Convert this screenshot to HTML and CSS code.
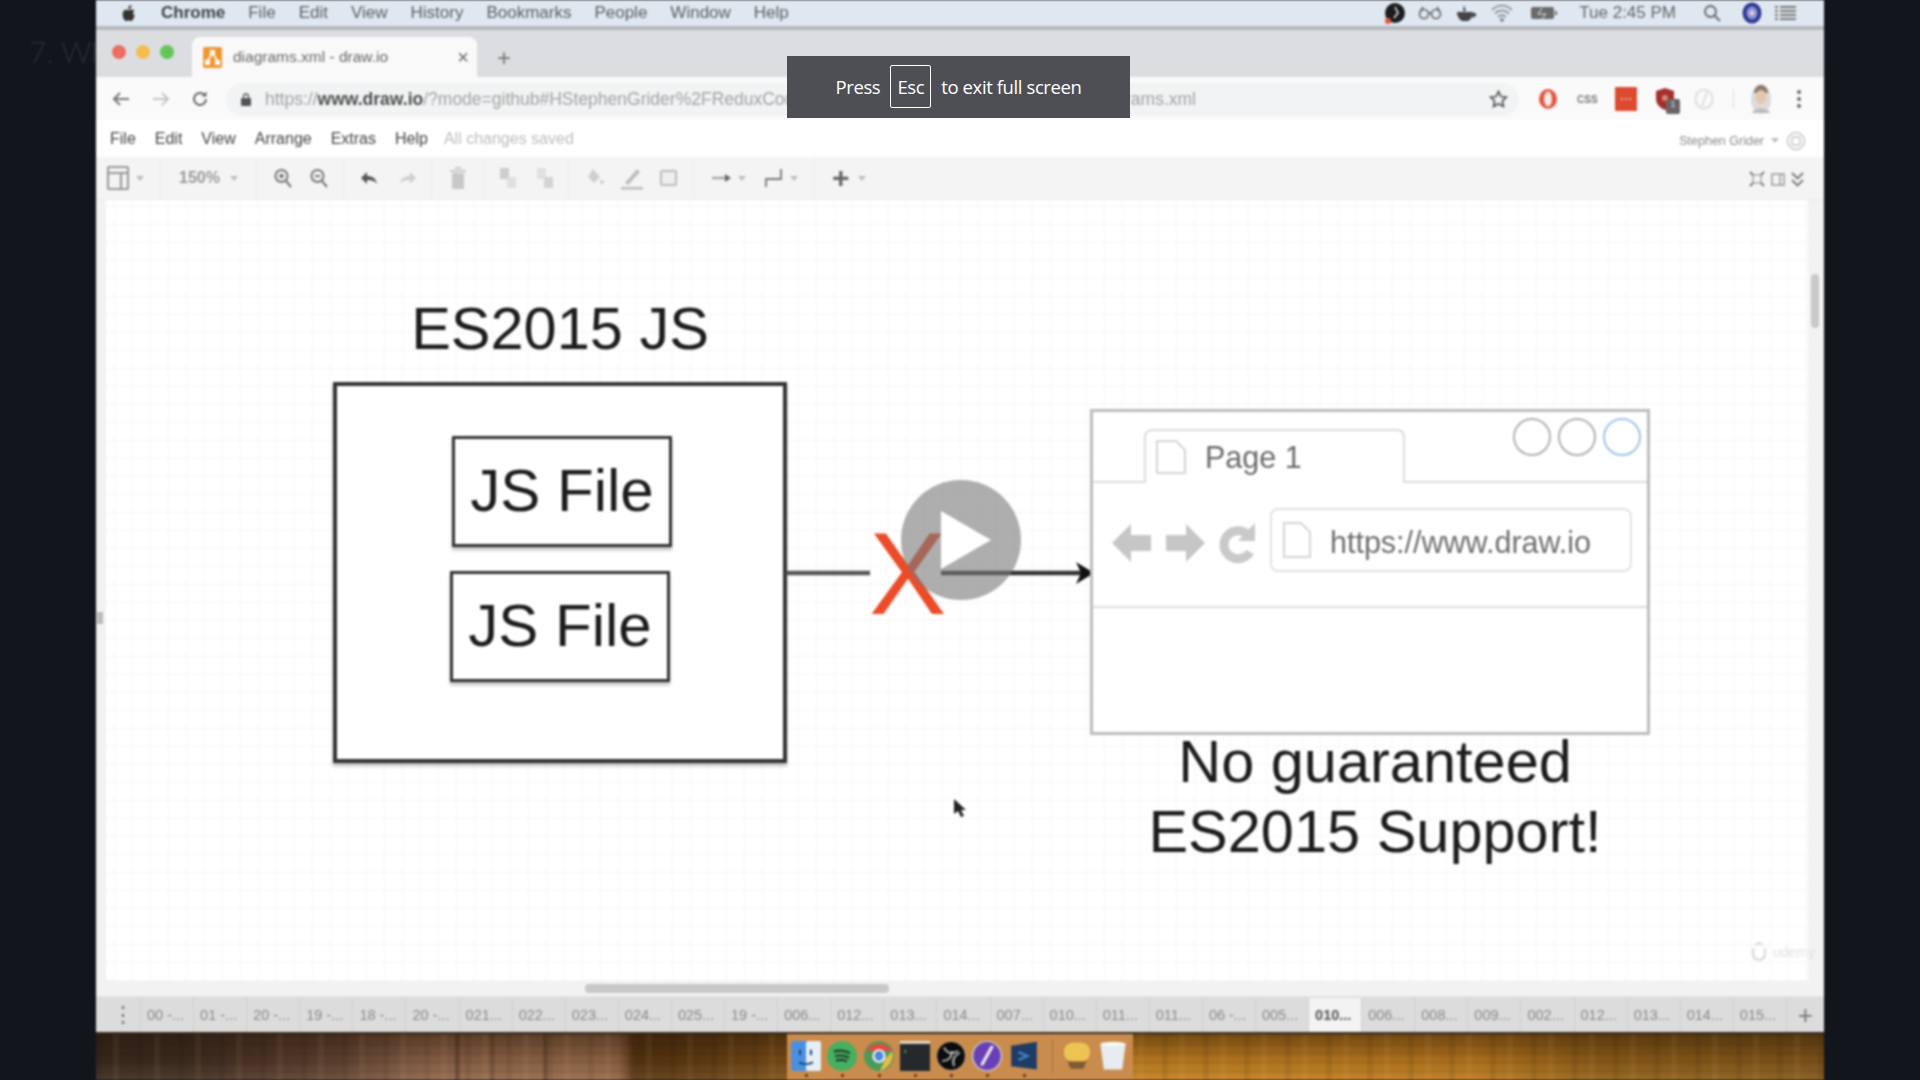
FILE: index.html
```html
<!DOCTYPE html>
<html lang="en">
<head>
<meta charset="utf-8">
<title>diagrams.xml - draw.io</title>
<link rel="stylesheet" href="styles.css">
</head>
<body>
<div class="stage">
  <main class="video">
    <header class="menubar">
      <svg class="apple" viewBox="0 0 16 18" width="15" height="17"><path d="M11.2 0c.1 1.300-.4 2.300-1 3-.7.800-1.700 1.300-2.600 1.200C7.400 3 8 1.900 8.600 1.300 9.300.6 10.400.1 11.200 0zM14.300 6c-1.700 1-1.900 3.600.3 5.500-.5 1.600-1.200 3-2.200 4.300-.9 1.200-1.800 1.400-2.900 1-1.100-.5-1.900-.5-3 0-1.200.5-2 .2-2.900-1C1.700 12.900 1 9 2.600 6.600c1.200-1.800 3.200-2 4.500-1.300.6.300 1.100.3 1.700 0 1.900-.9 4-.6 5.500.7z"/></svg>
      <span class="mb-item mb-strong">Chrome</span>
      <span class="mb-item">File</span><span class="mb-item">Edit</span><span class="mb-item">View</span><span class="mb-item">History</span><span class="mb-item">Bookmarks</span><span class="mb-item">People</span><span class="mb-item">Window</span><span class="mb-item">Help</span>
      <div class="mb-status">
        <svg width="22" height="24" viewBox="0 0 22 24"><circle cx="11" cy="12" r="10" fill="#1c1c1e"/><circle cx="4" cy="20" r="3" fill="#e8543a"/><path d="M11 6l3 6-4 5" stroke="#eee" stroke-width="1.500" fill="none"/></svg>
        <svg width="24" height="16" viewBox="0 0 24 16" fill="none" stroke="#666" stroke-width="1.600"><circle cx="6" cy="9" r="4.500"/><circle cx="18" cy="9" r="4.500"/><path d="M10 8h4M2 7l3-5M22 7l-3-5"/></svg>
        <svg width="24" height="20" viewBox="0 0 24 20" fill="#444"><path d="M3 9h16c0 5-3 8-5 9H8c-2-1-5-4-5-9z"/><path d="M19 10h3v3l-4 2z"/><path d="M10 2l2 6h-3z"/></svg>
        <svg width="24" height="20" viewBox="0 0 24 20" fill="none" stroke="#888" stroke-width="1.700"><path d="M2 7c6-6 14-6 20 0M5 10.500c4-4 10-4 14 0M8 14c2.500-2.400 5.500-2.400 8 0"/><circle cx="12" cy="17" r="1.200" fill="#888"/></svg>
        <svg class="mb-battery" width="28" height="16" viewBox="0 0 28 16"><rect x="1" y="2" width="23" height="12" rx="2" fill="#6a6a6a"/><rect x="25" y="6" width="2" height="4" fill="#6a6a6a"/><path d="M12 3l-4 6h8l-4 5" stroke="#dfe8f1" fill="none"/></svg>
        <span class="mb-clock">Tue 2:45 PM</span>
        <svg width="18" height="18" viewBox="0 0 18 18" fill="none" stroke="#666" stroke-width="1.800"><circle cx="7.500" cy="7.500" r="5.500"/><path d="M11.500 11.500L17 17"/></svg>
        <svg class="siri" width="20" height="22" viewBox="0 0 20 22"><ellipse cx="10" cy="11" rx="9.500" ry="10.500" fill="#2e3a90"/><ellipse cx="10" cy="11" rx="5.500" ry="6.500" fill="#8b93d8"/><circle cx="10" cy="11" r="2.500" fill="#e9c6d8"/></svg>
        <svg width="22" height="18" viewBox="0 0 22 18" fill="#777"><path d="M6 2h16v2H6zM6 6h16v2H6zM6 10h16v2H6zM6 14h16v2H6zM1 2h3v2H1zM1 6h3v2H1zM1 10h3v2H1zM1 14h3v2H1z"/></svg>
      </div>
    </header>

    <section class="tabstrip">
      <div class="lights"><i class="light red"></i><i class="light yellow"></i><i class="light green"></i></div>
      <div class="tab">
        <svg width="19" height="21" viewBox="0 0 19 21"><rect width="19" height="21" rx="2" fill="#f0962e"/><path d="M9.500 6L4.500 14M9.500 6L14.500 14" stroke="#fff" stroke-width="1.500"/><rect x="7" y="3" width="5" height="5" fill="#fff"/><rect x="2" y="13" width="5" height="5" fill="#fff"/><rect x="12" y="13" width="5" height="5" fill="#fff"/></svg>
        <span class="tab-title">diagrams.xml - draw.io</span>
        <span class="tab-close">×</span>
      </div>
      <span class="tab-new">+</span>
    </section>

    <section class="addressbar">
      <svg width="20" height="18" viewBox="0 0 20 18" fill="none" stroke="#777" stroke-width="2"><path d="M18 9H3M9 3L3 9l6 6"/></svg>
      <svg width="20" height="18" viewBox="0 0 20 18" fill="none" stroke="#c4c4c4" stroke-width="2"><path d="M2 9h15M11 3l6 6-6 6"/></svg>
      <svg width="18" height="18" viewBox="0 0 18 18" fill="none" stroke="#666" stroke-width="2"><path d="M15 9a6 6 0 1 1-2-4.500"/><path d="M15.500 1.500v5h-5z" fill="#666" stroke="none"/></svg>
      <div class="omnibox">
        <svg width="10" height="13" viewBox="0 0 10 13" fill="#555"><rect y="5" width="10" height="8" rx="1"/><path d="M2.500 5V3.500a2.500 2.500 0 0 1 5 0V5" fill="none" stroke="#555" stroke-width="1.300"/></svg>
        <span class="url"><span class="url-dim">https://</span><b class="url-host">www.draw.io</b><span class="url-dim">/?mode=github#HStephenGrider%2FReduxCode%2Fmaster%2Fdiagrams%2Fv1%2Fdiagrams.xml</span></span>
        <svg class="star" width="19" height="18" viewBox="0 0 19 18" fill="none" stroke="#555" stroke-width="1.700"><path d="M9.500 1.500l2.400 5 5.500.7-4 3.800 1 5.500-4.900-2.700-4.900 2.700 1-5.500-4-3.800 5.500-.7z"/></svg>
      </div>
      <div class="extensions">
        <svg width="22" height="24" viewBox="0 0 22 24"><ellipse cx="11" cy="12" rx="9" ry="10" fill="#e2563f"/><ellipse cx="11" cy="12" rx="4" ry="7.500" fill="#f6e9e6"/></svg>
        <span class="ext-css">CSS</span>
        <svg width="22" height="24" viewBox="0 0 22 24"><rect width="22" height="24" rx="1" fill="#dc4b2f"/><path d="M6 12h2M10 12h2M14 12h2" stroke="#f7c6ba" stroke-width="1.500"/></svg>
        <div class="ext-shield">
          <svg width="20" height="22" viewBox="0 0 20 22"><path d="M10 0l9 3v8c0 5-4 9-9 11-5-2-9-6-9-11V3z" fill="#a4302c"/><circle cx="10" cy="10" r="3" fill="#d58a83"/></svg>
          <span class="ext-badge">1</span>
        </div>
        <svg width="22" height="24" viewBox="0 0 22 24" fill="none" stroke="#dedede" stroke-width="2"><ellipse cx="11" cy="12" rx="8.500" ry="9.500"/><path d="M14 5l-5 14"/></svg>
        <i class="ext-divider"></i>
        <svg class="avatar" width="22" height="32" viewBox="0 0 22 32"><ellipse cx="11" cy="16" rx="10" ry="15" fill="#dcdcdc"/><path d="M4 10c0-5 4-8 7-8s7 3 7 8z" fill="#8a7b6e"/><ellipse cx="11" cy="14" rx="5.500" ry="7" fill="#e5c6b1"/><path d="M2 30c2-6 16-6 18 0z" fill="#bbb"/></svg>
        <svg class="ext-more" width="6" height="20" viewBox="0 0 6 20" fill="#666"><circle cx="3" cy="3" r="2"/><circle cx="3" cy="10" r="2"/><circle cx="3" cy="17" r="2"/></svg>
      </div>
    </section>

    <nav class="appmenu">
      <span class="am-item">File</span><span class="am-item">Edit</span><span class="am-item">View</span><span class="am-item">Arrange</span><span class="am-item">Extras</span><span class="am-item">Help</span>
      <span class="am-saved">All changes saved</span>
      <div class="am-user">
        <span class="am-name">Stephen Grider</span>
        <i class="caret"></i>
        <svg width="20" height="20" viewBox="0 0 20 20" fill="none" stroke="#c4c4c4" stroke-width="1.500"><circle cx="10" cy="10" r="8.500"/><rect x="6" y="6" width="8" height="8" rx="1"/></svg>
      </div>
    </nav>

    <section class="toolbar">
      <div class="tb-group tb-first">
        <svg width="22" height="26" viewBox="0 0 22 26" fill="none" stroke="#999" stroke-width="2.200"><rect x="1" y="2" width="20" height="22" rx="1"/><path d="M1 8h20M14 8v16"/></svg><i class="caret"></i>
      </div>
      <div class="tb-group tb-zoomlevel"><span class="tb-text">150%</span><i class="caret"></i></div>
      <div class="tb-group tb-zoom">
        <svg width="18" height="20" viewBox="0 0 18 20" fill="none" stroke="#777" stroke-width="2"><circle cx="7.500" cy="8" r="6"/><path d="M12 13l5 6M5 8h5M7.500 5.500v5"/></svg>
        <svg width="18" height="20" viewBox="0 0 18 20" fill="none" stroke="#777" stroke-width="2"><circle cx="7.500" cy="8" r="6"/><path d="M12 13l5 6M5 8h5"/></svg>
      </div>
      <div class="tb-group tb-undo">
        <svg width="18" height="14" viewBox="0 0 18 14"><path d="M1 7l6-6v4c5 0 9 2 10 8-2-3-5-4-10-4v4z" fill="#555"/></svg>
        <svg width="18" height="14" viewBox="0 0 18 14"><path d="M17 7l-6-6v4c-5 0-9 2-10 8 2-3 5-4 10-4v4z" fill="#cfcfcf"/></svg>
      </div>
      <div class="tb-group tb-delete">
        <svg width="16" height="22" viewBox="0 0 16 22" fill="#c8c8c8"><path d="M0 3h16v2H0zM5 0h6v2H5zM2 6h12v16H2z"/></svg>
      </div>
      <div class="tb-group tb-order">
        <svg width="20" height="22" viewBox="0 0 20 22" fill="#cdcdcd"><rect x="2" y="1" width="9" height="11"/><rect x="9" y="10" width="9" height="11" fill="#e0e0e0"/></svg>
        <svg width="20" height="22" viewBox="0 0 20 22" fill="#d4d4d4"><rect x="2" y="1" width="9" height="11" fill="#e0e0e0"/><rect x="9" y="10" width="9" height="11"/></svg>
      </div>
      <div class="tb-group tb-style">
        <svg width="20" height="20" viewBox="0 0 20 20" fill="#cfcfcf"><path d="M8 1l7 8-6 6-6-6z"/><circle cx="17" cy="14" r="2"/></svg>
        <svg width="24" height="24" viewBox="0 0 24 24"><path d="M5 17L17 3l3 3L8 19z" fill="#bdbdbd"/><rect x="1" y="21" width="22" height="2.500" fill="#bdbdbd"/></svg>
        <svg width="20" height="18" viewBox="0 0 20 18" fill="#eee" stroke="#bdbdbd" stroke-width="2"><rect x="2" y="2" width="15" height="14" rx="1"/></svg>
      </div>
      <div class="tb-group tb-conn">
        <svg width="20" height="10" viewBox="0 0 20 10"><path d="M0 5h14" stroke="#aaa" stroke-width="2.500"/><path d="M13 1l6 4-6 4z" fill="#666"/></svg><i class="caret"></i>
        <svg class="tb-elbow" width="20" height="22" viewBox="0 0 20 22" fill="none" stroke="#777" stroke-width="1.800"><path d="M2 20v-8h15V2"/></svg><i class="caret"></i>
      </div>
      <div class="tb-group tb-plus">
        <span class="tb-plus-sign">+</span><i class="caret"></i>
      </div>
      <div class="tb-right">
        <svg width="16" height="16" viewBox="0 0 16 16" fill="none" stroke="#777" stroke-width="1.800"><path d="M1 1l14 14M15 1L1 15"/><rect x="4" y="4" width="8" height="8" fill="#f4f4f4" stroke="#999" stroke-width="1.200"/></svg>
        <svg width="14" height="13" viewBox="0 0 14 13" fill="none" stroke="#999" stroke-width="1.500"><rect x="1" y="1" width="12" height="11"/><path d="M9 1v11"/></svg>
        <svg width="13" height="15" viewBox="0 0 13 15" fill="none" stroke="#777" stroke-width="1.800"><path d="M1 1l5.500 5.500L12 1M1 8l5.500 5.500L12 8"/></svg>
      </div>
    </section>

    <section class="workspace">
      <div class="canvas">
        <div class="node heading">ES2015 JS</div>
        <div class="node outer"></div>
        <div class="node file file-a">JS File</div>
        <div class="node file file-b">JS File</div>

        <svg class="node connector" width="310" height="100" viewBox="0 0 310 100">
          <path class="conn-line" d="M0 50H84"/>
          <path class="conn-line conn-dark" d="M155 50H296"/>
          <path class="conn-head" d="M290 39l18 11-18 11 5-11z"/>
        </svg>
        <div class="node red-x">X</div>

        <div class="node browser">
          <div class="br-top">
            <div class="br-tab">
              <svg width="32" height="36" viewBox="0 0 32 36" fill="#fff" stroke="#d5d5d5" stroke-width="2"><path d="M2 2h19l9 9v23H2z"/></svg>
              <span class="br-tab-text">Page 1</span>
            </div>
            <div class="br-circles"><i class="br-c"></i><i class="br-c"></i><i class="br-c br-c-blue"></i></div>
          </div>
          <div class="br-nav">
            <div class="br-arrows">
              <svg width="40" height="50" viewBox="0 0 40 50" fill="#c6c6c6"><path d="M0 25L19 6v11h20v16H19v11z"/></svg>
              <svg width="40" height="50" viewBox="0 0 40 50" fill="#c6c6c6"><path d="M40 25L21 6v11H1v16h20v11z"/></svg>
              <svg width="38" height="44" viewBox="0 0 38 44" fill="none" stroke="#c9c9c9" stroke-width="9"><path d="M32 31a14 14 0 1 1-1-16"/><path d="M37 2v18H20z" fill="#c9c9c9" stroke="none"/></svg>
            </div>
            <div class="br-url">
              <svg width="30" height="38" viewBox="0 0 30 38" fill="#fff" stroke="#d5d5d5" stroke-width="2"><path d="M2 2h17l9 9v25H2z"/></svg>
              <span class="br-url-text">https://www.draw.io</span>
            </div>
          </div>
        </div>

        <div class="node caption">No guaranteed<br>ES2015 Support!</div>

        <div class="node play"><i class="play-tri"></i></div>
        <svg class="node cursor" width="14" height="20" viewBox="0 0 14 20"><path d="M1 1v15l4-3 3 6 3-1-3-6h5z" fill="#222"/></svg>
        <div class="node watermark">
          <svg width="18" height="20" viewBox="0 0 18 20" fill="none" stroke="#dcdcdc" stroke-width="2.500"><path d="M3 6v6a6 6 0 0 0 12 0V6M5 3l4-2 4 2"/></svg>
          <span>udemy</span>
        </div>
        <i class="node v-thumb"></i>
        <i class="node left-grip"></i>
      </div>
      <div class="hscroll"><i class="hscroll-thumb"></i></div>
    </section>

    <footer class="pagebar">
      <span class="pb-menu">⋮</span>
      <span class="pb-tab">00 -...</span><span class="pb-tab">01 -...</span><span class="pb-tab">20 -...</span><span class="pb-tab">19 -...</span><span class="pb-tab">18 -...</span><span class="pb-tab">20 -...</span><span class="pb-tab">021...</span><span class="pb-tab">022...</span><span class="pb-tab">023...</span><span class="pb-tab">024...</span><span class="pb-tab">025...</span><span class="pb-tab">19 -...</span><span class="pb-tab">006...</span><span class="pb-tab">012...</span><span class="pb-tab">013...</span><span class="pb-tab">014...</span><span class="pb-tab">007...</span><span class="pb-tab">010...</span><span class="pb-tab">011...</span><span class="pb-tab">011...</span><span class="pb-tab">06 -...</span><span class="pb-tab">005...</span><span class="pb-tab pb-active">010...</span><span class="pb-tab">006...</span><span class="pb-tab">008...</span><span class="pb-tab">009...</span><span class="pb-tab">002...</span><span class="pb-tab">012...</span><span class="pb-tab">013...</span><span class="pb-tab">014...</span><span class="pb-tab">015...</span>
      <span class="pb-add">+</span>
    </footer>

    <section class="desktop">
      <div class="dock">
        <span class="dock-app"><svg viewBox="0 0 30 34" preserveAspectRatio="none"><rect width="30" height="34" rx="3" fill="#4a90e2"/><rect x="15" width="15" height="34" rx="2" fill="#e6eef8"/><path d="M9 10v6M20 10v6M8 24c4 3 10 3 14 0" stroke="#1c3f6e" stroke-width="2" fill="none"/></svg></span>
        <span class="dock-app"><svg viewBox="0 0 30 34" preserveAspectRatio="none"><ellipse cx="15" cy="17" rx="15" ry="17" fill="#46b060"/><path d="M7 12c6-2 11-1 16 2M8 17c5-1 10-1 14 2M9 22c4-1 8-1 11 1" stroke="#1d3a27" stroke-width="2.500" fill="none"/></svg></span>
        <span class="dock-app"><svg viewBox="0 0 30 36" preserveAspectRatio="none"><ellipse cx="15" cy="18" rx="15" ry="18" fill="#4c9a5a"/><path d="M2 12C6 0 24 0 28 12H15z" fill="#d9503f"/><path d="M28 12c3 10-3 20-12 24l5-14z" fill="#e6bb45"/><ellipse cx="15" cy="18" rx="6.500" ry="8" fill="#fff"/><ellipse cx="15" cy="18" rx="4.500" ry="6" fill="#4e86dc"/></svg></span>
        <span class="dock-app"><svg viewBox="0 0 32 32" preserveAspectRatio="none"><rect width="32" height="32" fill="#23292c"/><rect width="32" height="3" fill="#e8dfd2"/><path d="M4 9l3 2-3 2" stroke="#5fae6b" fill="none"/></svg></span>
        <span class="dock-app"><svg viewBox="0 0 30 36" preserveAspectRatio="none"><ellipse cx="15" cy="18" rx="14.500" ry="17.500" fill="#0c0c0c" stroke="#c8a88a" stroke-width="1"/><path d="M8 8c4 8 8 8 14 4M24 14c-6 4-8 8-6 16M6 24c6 0 10-4 10-12" stroke="#bbb" stroke-width="2" fill="none"/></svg></span>
        <span class="dock-app"><svg viewBox="0 0 28 36" preserveAspectRatio="none"><ellipse cx="14" cy="18" rx="13.500" ry="17.500" fill="#6a3fb5" stroke="#ccc" stroke-width="1.500"/><path d="M19 6L9 29" stroke="#eee" stroke-width="3"/></svg></span>
        <span class="dock-app"><svg viewBox="0 0 28 38" preserveAspectRatio="none"><path d="M2 6l24-5v35L2 32z" fill="#1f3c66"/><path d="M9 14l8 5-8 5" stroke="#4a8ad4" stroke-width="2.500" fill="none"/></svg></span>
        <i class="dock-divider"></i>
        <span class="dock-stack"><svg viewBox="0 0 28 38" preserveAspectRatio="none"><rect x="2" y="2" width="24" height="24" rx="9" fill="#edc454"/><path d="M5 26h18l-3 9H8z" fill="#7f5a33"/></svg></span>
        <span class="dock-trash"><svg viewBox="0 0 26 40" preserveAspectRatio="none"><path d="M2 4h22l-3 34H5z" fill="#e8ecf0"/><ellipse cx="13" cy="4" rx="11" ry="3" fill="#f7f8fa"/></svg></span>
      </div>
    </section>
  </main>

  <div class="course-title">7. Why Create React App?</div>

  <div class="fs-notice">
    <span class="fs-text">Press</span>
    <kbd class="fs-key">Esc</kbd>
    <span class="fs-text">to exit full screen</span>
  </div>
</div>
</body>
</html>
```

FILE: styles.css
```css
* { box-sizing: border-box; }
html, body { margin: 0; height: 100%; }
body { background: #12161c; overflow: hidden; font-family: "Liberation Sans", Arial, sans-serif; }
i { display: block; font-style: normal; }

.stage { position: relative; width: 1920px; height: 1080px; display: flex; justify-content: center; overflow: hidden; }

.course-title { position: absolute; left: 29px; top: 33px; font: 300 30px "Lato", sans-serif; color: rgba(255,255,255,.1); white-space: nowrap; z-index: 2; filter: blur(.8px); }

.video { position: relative; z-index: 1; width: 1728px; height: 1080px; display: flex; flex-direction: column; filter: blur(1px); color: #555; background: #fff; }

.menubar { height: 30px; flex: none; background: #dfe8f1; border-bottom: 4px solid #b4b9be; display: flex; align-items: center; padding-left: 25px; padding-right: 28px; font-size: 17px; color: #555; }
.apple { fill: #333; margin-right: 25px; }
.mb-item { margin-right: 23px; color: #5a5e62; }
.mb-strong { font-weight: bold; color: #3c4145; }
.mb-status { margin-left: auto; display: flex; align-items: center; gap: 12px; }
.mb-battery { margin-left: 4px; }
.mb-clock { margin: 0 15px 0 9px; color: #666; }
.siri { margin-left: 9px; }

.tabstrip { height: 47px; flex: none; background: #dcdde0; display: flex; align-items: flex-end; padding-left: 16px; }
.lights { display: flex; gap: 10px; align-self: center; margin-right: 18px; margin-top: -4px; }
.light { width: 14px; height: 14px; border-radius: 50%; }
.red { background: #ee6a5f; } .yellow { background: #f4bd4f; } .green { background: #60c453; }
.tab { width: 285px; height: 40px; background: #f9f9f9; border-radius: 8px 8px 0 0; display: flex; align-items: center; padding: 0 8px 0 11px; gap: 11px; }
.tab-title { font-size: 15.500px; color: #666; }
.tab-close { margin-left: auto; font-size: 20px; color: #666; }
.tab-new { font-size: 24px; color: #777; margin-left: 20px; align-self: center; margin-top: 8px; }

.addressbar { height: 43px; flex: none; background: #fafafa; display: flex; align-items: center; padding: 1px 0 0 15px; gap: 20px; }
.omnibox { width: 1293px; height: 33px; margin-left: -3px; border-radius: 17px; background: #f1f3f4; display: flex; align-items: center; padding: 0 11px 0 15px; gap: 14px; }
.url { font-size: 17.500px; color: #a2a2a2; white-space: nowrap; flex: 1; overflow: hidden; }
.url-host { color: #4d4d4d; }
.star { flex: none; }
.extensions { display: flex; align-items: center; gap: 18px; margin-left: -2px; }
.ext-css { font-size: 10px; font-weight: bold; color: #777; width: 20px; }
.ext-shield { position: relative; height: 22px; }
.ext-badge { position: absolute; left: 11px; top: 11px; width: 14px; height: 15px; background: #666; color: #ddd; font-size: 9px; text-align: center; border-radius: 2px; }
.ext-divider { width: 1px; height: 20px; background: #ddd; }
.avatar { margin-left: -2px; }
.ext-more { margin-left: 6px; }

.appmenu { height: 37px; flex: none; background: #fff; display: flex; align-items: center; padding: 1px 18px 0 14px; font-size: 16px; }
.am-item { margin-right: 19px; color: #444; }
.am-saved { color: #bdbdbd; margin-left: -3px; }
.am-user { margin-left: auto; display: flex; align-items: center; gap: 7px; margin-top: 3px; }
.am-name { font-size: 12.500px; color: #888; }
.caret { width: 0; height: 0; border-left: 4px solid transparent; border-right: 4px solid transparent; border-top: 5px solid #bdbdbd; }

.toolbar { height: 43px; flex: none; background: #f4f4f4; border-bottom: 1px solid #ebebeb; display: flex; align-items: center; }
.tb-group { height: 100%; display: flex; align-items: center; border-right: 1px solid #ececec; gap: 12px; padding: 0 12px; }
.tb-first { width: 65px; padding: 0 0 0 11px; gap: 7px; }
.tb-zoomlevel { width: 96px; padding: 0 0 0 18px; gap: 10px; }
.tb-text { font-size: 16px; color: #999; font-weight: bold; }
.tb-zoom { width: 87px; padding-left: 17px; gap: 18px; }
.tb-undo { width: 88px; padding-left: 16px; gap: 21px; }
.tb-delete { width: 52px; padding-left: 18px; }
.tb-order { width: 85px; gap: 17px; padding-left: 14px; }
.tb-style { width: 125px; gap: 15px; padding-left: 16px; }
.tb-conn { width: 121px; gap: 6px; padding-left: 18px; }
.tb-elbow { margin-left: 12px; }
.tb-plus { border-right: 0; padding-left: 17px; gap: 8px; }
.tb-plus-sign { font-size: 30px; font-weight: bold; color: #666; line-height: 1; }
.tb-right { margin-left: auto; display: flex; align-items: center; gap: 6px; padding-right: 20px; margin-top: 2px; }

.workspace { flex: 1; min-height: 0; display: flex; flex-direction: column; padding-left: 10px; background: #f2f2f2; }
.canvas { position: relative; flex: 1; min-height: 0; margin-right: 16px; background-color: #fff;
  background-image: linear-gradient(#f6f6f6 1px, transparent 1px), linear-gradient(90deg, #f6f6f6 1px, transparent 1px), linear-gradient(#eeeeee 1px, transparent 1px), linear-gradient(90deg, #eeeeee 1px, transparent 1px);
  background-size: 18px 18px, 18px 18px, 72px 72px, 72px 72px; background-position: 8px 6px; }
.hscroll { height: 15px; flex: none; position: relative; background: #f2f2f2; }
.hscroll-thumb { position: absolute; left: 479px; top: 3px; width: 304px; height: 9px; border-radius: 4px; background: #c8c8c8; }

.node { position: absolute; }
.heading { left: 289px; top: 94px; width: 330px; text-align: center; font-size: 59.500px; color: #1c1c1c; white-space: nowrap; }
.outer { left: 227px; top: 182px; width: 454px; height: 381px; border: 4px solid #333; background: #fff; box-shadow: 0 3px 3px rgba(0,0,0,.25); }
.file { width: 220px; height: 111px; border: 3.500px solid #333; background: #fff; display: flex; align-items: center; justify-content: center; padding-bottom: 2px; font-size: 60px; color: #1c1c1c; box-shadow: 0 3px 3px rgba(0,0,0,.25); }
.file-a { left: 346px; top: 236px; }
.file-b { left: 344px; top: 371px; }
.connector { left: 680px; top: 323px; }
.conn-line { stroke: #555; stroke-width: 4.500; }
.conn-dark { stroke: #333; }
.conn-head { fill: #111; }
.red-x { left: 763px; top: 290px; width: 74px; font-size: 116px; line-height: 168px; height: 168px; color: #ea4c2a; text-align: center; font-weight: normal; }

.browser { left: 984px; top: 209px; width: 560px; height: 326px; background: #fff; border: 3px solid #bcbcbc; }
.br-top { height: 71px; border-bottom: 2px solid #dcdcdc; display: flex; position: relative; padding-left: 51px; padding-top: 17px; }
.br-tab { width: 261px; height: 54px; background: #fff; border: 2px solid #dcdcdc; border-bottom: 0; border-radius: 8px 8px 0 0; display: flex; align-items: center; gap: 18px; padding: 0 0 0 9px; }
.br-tab-text { font-size: 30.500px; color: #6a6a6a; }
.br-circles { position: absolute; right: 6px; top: 6px; display: flex; gap: 7px; }
.br-c { width: 38px; height: 38px; border: 2px solid #b0b0b0; border-radius: 50%; }
.br-c-blue { border-color: #9dc3ea; }
.br-nav { height: 125px; border-bottom: 2px solid #dcdcdc; display: flex; align-items: flex-start; padding: 25px 0 0 19px; gap: 14px; }
.br-arrows { display: flex; gap: 13px; align-items: center; height: 70px; }
.br-url { width: 362px; height: 64px; border: 2px solid #e2e2e2; border-radius: 8px; display: flex; align-items: center; gap: 18px; padding-left: 10px; }
.br-url-text { font-size: 30.500px; color: #6e6e6e; white-space: nowrap; padding-top: 5px; }
.caption { left: 1004px; top: 527px; width: 530px; text-align: center; font-size: 59.500px; line-height: 70px; color: #1c1c1c; white-space: nowrap; }

.play { left: 795px; top: 280px; width: 120px; height: 120px; border-radius: 50%; background: rgba(120,120,120,.6); display: flex; align-items: center; justify-content: center; padding-left: 10px; }
.play-tri { width: 0; height: 0; border-left: 50px solid #fff; border-top: 29px solid transparent; border-bottom: 29px solid transparent; }
.cursor { left: 847px; top: 598px; }
.watermark { left: 1644px; top: 742px; display: flex; align-items: center; gap: 5px; font-size: 14px; color: #e2e2e2; }
.v-thumb { left: 1705px; top: 74px; width: 8px; height: 54px; border-radius: 4px; background: #c9c9c9; }
.left-grip { left: -9px; top: 412px; width: 6px; height: 12px; background: #bbb; }

.pagebar { height: 36px; flex: none; background: #dcdcdc; border-top: 1px solid #e4e4e4; display: flex; align-items: stretch; padding: 1px 0 0 10px; font-size: 14.500px; color: #8a8a8a; }
.pb-menu { width: 35px; display: flex; align-items: center; justify-content: center; font-size: 22px; color: #777; border-right: 1px solid #d0d0d0; }
.pb-tab { width: 53.100px; display: flex; align-items: center; padding-left: 6px; border-right: 1px solid #d0d0d0; white-space: nowrap; overflow: hidden; }
.pb-active { background: #f3f3f3; color: #555; font-weight: bold; }
.pb-add { flex: 1; display: flex; align-items: center; justify-content: center; font-size: 26px; color: #777; }

.desktop { flex: none; height: 48px; display: flex; justify-content: center; border-top: 2px solid #3a2a1c;
  background:
    linear-gradient(90deg, transparent 358px, rgba(30,15,5,.4) 361px, transparent 365px, transparent 393px, rgba(30,15,5,.25) 396px, transparent 400px, transparent 446px, rgba(30,15,5,.35) 449px, transparent 453px),
    repeating-linear-gradient(90deg, rgba(20,10,0,.08) 0 6px, transparent 6px 17px, rgba(255,220,160,.05) 17px 23px, transparent 23px 41px),
    repeating-linear-gradient(180deg, rgba(20,10,0,.06) 0 3px, transparent 3px 9px),
    linear-gradient(180deg, rgba(40,22,8,.5) 0%, rgba(40,22,8,.12) 55%, rgba(255,220,170,.1) 100%),
    linear-gradient(90deg, #35281f 0, #3b2a20 90px, #5e4232 240px, #8a6249 330px, #936849 500px, #8f6344 522px, #54330f 540px, #5d3a12 600px, #7a4d16 690px, #c2801f 1040px, #b8781d 1380px, #8f5e17 1500px, #80551a 1728px); }
.dock { width: 346px; background: #c98c4d; display: flex; align-items: center; gap: 6.300px; padding: 0 0 2px 4px; }
.dock-app, .dock-stack, .dock-trash { position: relative; display: block; width: 30px; height: 30px; flex: none; }
.dock-app svg, .dock-stack svg, .dock-trash svg { display: block; width: 30px; height: 30px; }
.dock-app::after { content: ""; position: absolute; left: 14px; bottom: -6px; width: 3px; height: 3px; border-radius: 50%; background: #4a2e14; }
.dock-divider { width: 1px; height: 34px; background: #a8733c; margin: 0 3px 0 7px; }
.dock-trash { margin-left: -1px; }

.fs-notice { position: absolute; left: 787px; top: 56px; width: 343px; height: 62px; background: #4d4f55; z-index: 3; display: flex; align-items: center; justify-content: center; gap: 10px; padding-bottom: 1px; color: #fff; font-family: "Open Sans", sans-serif; font-size: 18.500px; letter-spacing: -.4px; }
.fs-key { font-family: inherit; font-size: inherit; width: 41px; height: 43px; border: 1px solid #fff; border-radius: 2px; display: flex; align-items: center; justify-content: center; }
```
